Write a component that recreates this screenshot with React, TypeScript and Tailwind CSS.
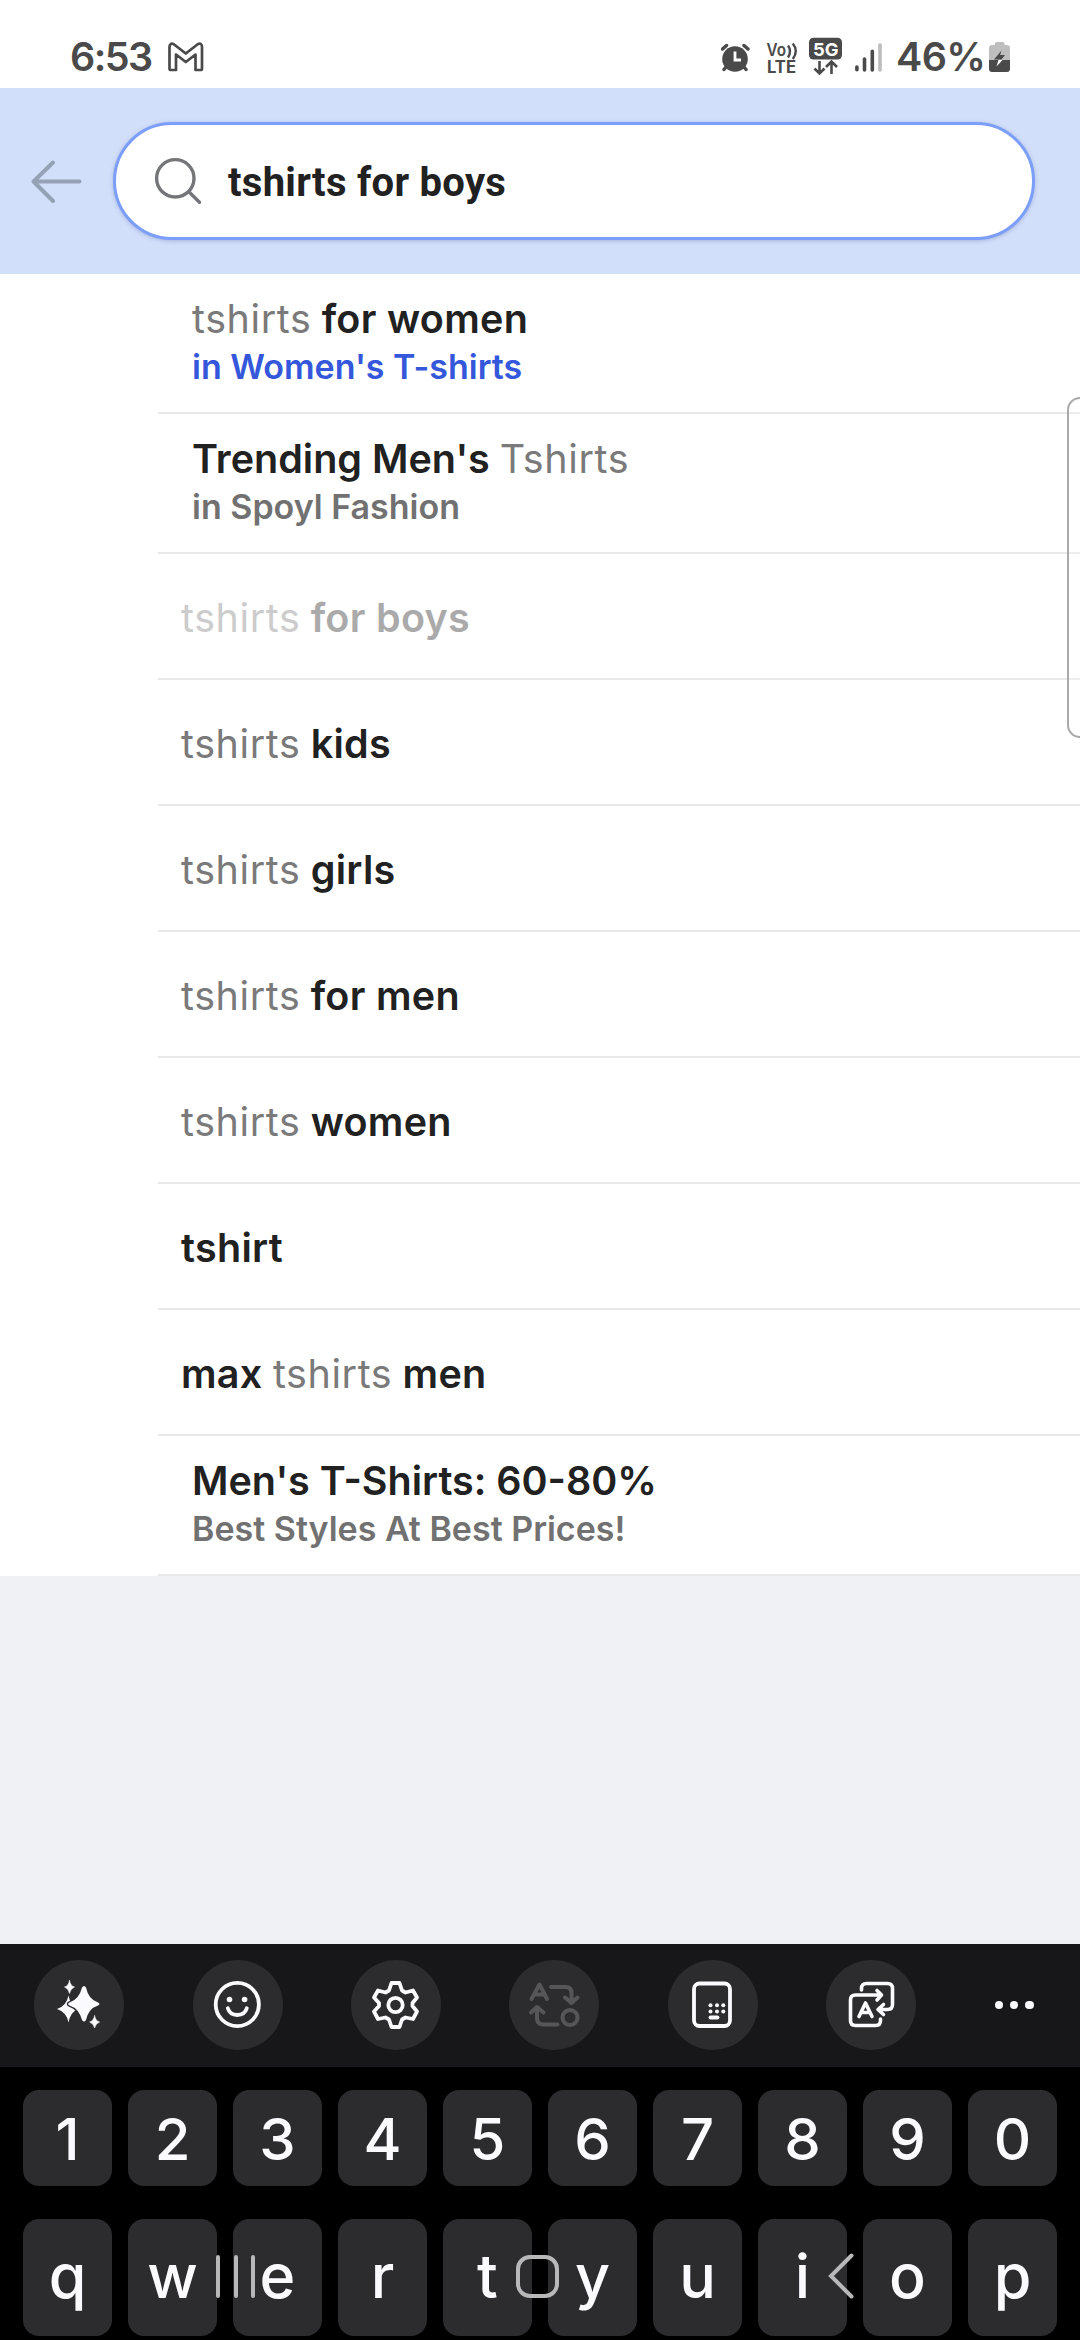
import type { ReactNode } from 'react';

type Part = { text: string; dim?: boolean };
type Row = { parts: Part[]; sub?: string; blue?: boolean; faded?: boolean; tight?: boolean };

const rows: Row[] = [
  { parts: [{ text: 'tshirts', dim: true }, { text: ' for women' }], sub: "in Women's T-shirts", blue: true },
  { parts: [{ text: "Trending Men's " }, { text: 'Tshirts', dim: true }], sub: 'in Spoyl Fashion', tight: true },
  { parts: [{ text: 'tshirts', dim: true }, { text: ' for boys' }], faded: true },
  { parts: [{ text: 'tshirts', dim: true }, { text: ' kids' }] },
  { parts: [{ text: 'tshirts', dim: true }, { text: ' girls' }] },
  { parts: [{ text: 'tshirts', dim: true }, { text: ' for men' }] },
  { parts: [{ text: 'tshirts', dim: true }, { text: ' women' }] },
  { parts: [{ text: 'tshirt' }] },
  { parts: [{ text: 'max ' }, { text: 'tshirts', dim: true }, { text: ' men' }] },
  { parts: [{ text: "Men's T-Shirts: 60-80%" }], sub: 'Best Styles At Best Prices!', tight: true },
];

function StatusBar() {
  return (
    <div className="flex h-[88px] items-center bg-white pt-[26px] text-[#4a4a4a]">
      <span className="ml-[70px] w-[98px] whitespace-nowrap text-[39.5px] leading-[44px] font-semibold tracking-[-1.6px]">6:53</span>
      <svg className="h-[30px] w-[36px]" viewBox="0 0 36 30" fill="none" stroke="currentColor" strokeWidth="2.7" strokeLinejoin="round">
        <path d="M1.5 26.5V4.5Q2 .8 5.5 2L17.8 11.5 30 2Q33.800 .8 34 4.500V26.500Q34 28 32.500 28H27.500V12.500L17.800 20 8 12.500V28H3Q1.500 28 1.500 26.500Z" />
      </svg>
      <svg className="ml-[517px] h-[30px] w-[30px]" viewBox="0 0 30 30">
        <g stroke="currentColor" strokeWidth="3.500" strokeLinecap="round" fill="none">
          <path d="M1.500 7 5.500 3.500M27 7l-4-3.500M5.500 24.500l-2.500 3M22.500 24.500l2.500 3" />
        </g>
        <circle cx="14" cy="17" r="12.800" fill="currentColor" />
        <path d="M14 9.500v8.500h6" stroke="#fff" strokeWidth="2.800" fill="none" />
      </svg>
      <svg className="ml-[14px] h-[34px] w-[34px] overflow-visible" viewBox="0 0 34 34" fill="currentColor">
        <text x="1.500" y="16" fontSize="17" fontWeight="600" textLength="19.500" lengthAdjust="spacingAndGlyphs" fontFamily="Inter">Vo</text>
        <text x="2" y="33" fontSize="17" fontWeight="700" textLength="29" lengthAdjust="spacingAndGlyphs" fontFamily="Inter">LTE</text>
        <path d="M23 5.500q4 5.500 0 12M27.800 3.500q6 7.500 0 15.500" fill="none" stroke="currentColor" strokeWidth="2.400" />
      </svg>
      <svg className="ml-[10px] h-[38px] w-[34px] overflow-visible" viewBox="0 0 34 38" fill="none">
        <rect x="0" y="-.2" width="33" height="21.700" rx="4.500" fill="currentColor" />
        <text x="4" y="17.500" fontSize="18" fontWeight="700" fill="#fff" textLength="25.500" lengthAdjust="spacingAndGlyphs" fontFamily="Inter">5G</text>
        <path d="M10.500 23v12M5.500 30.500l5 5 5-5M22.500 36V24.500M17 29l5.500-5.500L28 29" stroke="currentColor" strokeWidth="2.600" />
      </svg>
      <svg className="ml-[12px] h-[30px] w-[28px]" viewBox="0 0 28 30" fill="none" strokeWidth="3.600" strokeLinecap="round" stroke="currentColor">
        <path d="M1.900 25v2.800M9.500 17V28M17.300 9.200V28" />
        <path d="M25 3V28" stroke="#bcbcbc" />
      </svg>
      <span className="ml-[13px] w-[90px] whitespace-nowrap text-[39.5px] leading-[44px] font-semibold tracking-[-0.6px]">46%</span>
      <svg className="ml-[3px] h-[32px] w-[22px]" viewBox="0 0 22 32">
        <path d="M6 4V2.500Q6 1 8 1h5.500Q15.500 1 15.500 2.500V4H18Q21 4 21 7V19H0V7Q0 4 3 4Z" fill="#bebebe" />
        <path d="M0 19H21V27.500Q21 31 18 31H3Q0 31 0 27.500Z" fill="currentColor" />
        <path d="M12.500 9.500 5 18.500H9.500L11 14.500Z" fill="currentColor" />
        <path d="M10.500 14H16L12.500 18.500H9Z" fill="currentColor" />
        <path d="M9.500 19H13.500L7.500 25.500Z" fill="#fff" />
      </svg>
    </div>
  );
}

function SearchHeader() {
  return (
    <div className="flex h-[186px] items-center bg-[#d2dffb] pb-[0.5px]">
      <svg className="ml-[30px] h-[46px] w-[54px]" viewBox="0 0 54 46" fill="none" stroke="#95a1b5" strokeWidth="4" strokeLinecap="round" strokeLinejoin="round">
        <path d="M49.500 23.500H3.500M23 4.500 3.500 23.500 23 43" />
      </svg>
      <div className="ml-[29px] flex h-[118px] w-[922px] items-center rounded-full border-[3px] border-[#7c9efb] bg-white shadow-[0_1px_4px_rgba(60,80,140,0.3)]">
        <svg className="ml-[38px] h-[48px] w-[48px]" viewBox="0 0 48 48" fill="none" stroke="#747579" strokeWidth="3.400" strokeLinecap="round">
          <circle cx="21.300" cy="21.300" r="18.700" />
          <path d="M34.800 34.800 45.500 45.300" />
        </svg>
        <span className="ml-[26px] pt-[4px] font-[Roboto] text-[40px] font-bold tracking-[0.28px] text-[#212121]">tshirts for boys</span>
      </div>
    </div>
  );
}

function Suggestion({ row }: { row: Row }) {
  const title = (
    <div className={row.faded ? 'whitespace-pre text-[39.5px] leading-[48px] opacity-38' : 'whitespace-pre text-[39.5px] leading-[48px]'}>
      {row.parts.map((p, i) => (
        <span
          key={i}
          className={
            p.dim
              ? 'font-normal tracking-[0.6px] text-[#7a7a7a]'
              : row.tight
                ? 'font-semibold text-[#212121]'
                : 'font-semibold tracking-[0.3px] text-[#212121]'
          }
        >
          {p.text}
        </span>
      ))}
    </div>
  );
  if (!row.sub) {
    return <div className="ml-[158px] flex h-[126px] items-center border-b-2 border-[#e9e9e9] pt-[3px] pl-[23px]">{title}</div>;
  }
  return (
    <div className="ml-[158px] flex h-[140px] flex-col border-b-2 border-[#e9e9e9] pt-[21px] pl-[34px]">
      {title}
      <div className={row.blue ? 'text-[34px] leading-[48px] font-semibold text-[#3457dc]' : 'text-[34px] leading-[48px] font-semibold text-[#717171]'}>
        {row.sub}
      </div>
    </div>
  );
}

function Tool({ children }: { children: ReactNode }) {
  return (
    <div className="flex w-[158.4px] shrink-0 justify-center">
      <div className="flex size-[90px] items-center justify-center rounded-full bg-[#2c2c2e]">{children}</div>
    </div>
  );
}

const toolSvg = {
  width: 54,
  height: 54,
  viewBox: '0 0 54 54',
  fill: 'none',
  stroke: '#fafaff',
  strokeWidth: 3.8,
  strokeLinecap: 'round',
  strokeLinejoin: 'round',
} as const;

function Toolbar() {
  return (
    <div className="flex h-[123px] items-center bg-[#171719] pb-[1px]">
      <Tool>
        <svg {...toolSvg} fill="#fafaff" stroke="none">
          <path d="M16.500 17.500Q18.500 28 26 31Q18.500 34 16.500 44.500Q14.500 34 5 31Q14.500 28 16.500 17.500Z" />
          <path d="M30 9.500Q32 6.500 34 9.500Q36.500 21.500 46 24.500Q49 26 46 27.500Q36.500 30.500 34 42Q32 45 30 42Q27 30.500 17.500 27.500Q14.500 26 17.500 24.500Q27 21.500 30 9.500Z" stroke="#2c2c2e" strokeWidth="2.600" paintOrder="stroke" />
          <path d="M17.500 2.500Q18.500 8 22.500 9Q18.500 10.500 17.500 15.500Q16.500 10.500 12.500 9Q16.500 8 17.500 2.500Z" stroke="#fafaff" strokeWidth=".6" />
          <path d="M42.600 37.800Q43.600 43 47.600 44Q43.600 45.500 42.600 50Q41.600 45.500 37.600 44Q41.600 43 42.600 37.800Z" stroke="#fafaff" strokeWidth=".6" />
        </svg>
      </Tool>
      <Tool>
        <svg {...toolSvg}>
          <circle cx="26.300" cy="26.500" r="21.600" />
          <path d="M16.800 30.300Q18.800 37 26.300 37Q33.800 37 35.800 30.300" />
          <circle cx="18.500" cy="21.500" r="2.800" fill="#fafaff" stroke="none" />
          <circle cx="33.600" cy="21.500" r="2.800" fill="#fafaff" stroke="none" />
        </svg>
      </Tool>
      <Tool>
        <svg {...toolSvg}>
          <path d="M22.500 5H30.500L33 12.500 36.500 14.500 44 12.500 48 19.500 43.500 25V28L48 33.500 44 41 36.500 39.500 33 41.500 30.500 49H22.500L20 41.500 16.500 39.500 9 41 5 33.500 10 28V25L5 19.500 9 12.500 16.500 14.500 20 12.500Z" />
          <circle cx="26.500" cy="27" r="7.200" />
        </svg>
      </Tool>
      <Tool>
        <svg {...toolSvg} stroke="#565658" strokeWidth={4}>
          <path d="M4.500 21 12.500 6.500 20 21M8 16.500H17M24 9H38.500Q44.500 9 44.500 15V25M38 19.500 44.500 25 50.500 19.500M4 34.500 10 29 16.500 34.500M10 30V40Q10 46.500 16.500 46.500H30.500" />
          <circle cx="43" cy="39.500" r="7.500" />
        </svg>
      </Tool>
      <Tool>
        <svg {...toolSvg}>
          <rect x="8" y="5.500" width="36" height="42.500" rx="5.500" />
          <path d="M24.500 39.500H31.500" />
          <g fill="#fafaff" stroke="none">
            <circle cx="24.500" cy="27.300" r="2" />
            <circle cx="31" cy="27.300" r="2" />
            <circle cx="37.300" cy="27.300" r="2" />
            <circle cx="24.500" cy="33.500" r="2" />
            <circle cx="31" cy="33.500" r="2" />
            <circle cx="37.300" cy="33.500" r="2" />
          </g>
        </svg>
      </Tool>
      <Tool>
        <svg {...toolSvg} strokeWidth={3.6}>
          <path d="M17.500 12V10.500Q17.500 5.500 22.500 5.500H43.500Q48.500 5.500 48.500 10.500V26.500Q48.500 31.500 43.500 31.500H35M39.500 26.500 34 31.500 39.500 36.500M37.500 17H11.500Q6.500 17 6.500 22V42.500Q6.500 47.500 11.500 47.500H31.500Q36.500 47.500 36.500 42.500V41M33 12.500 37.500 17 33 22" />
          <path d="M15 38.500 21.500 25 28 38.500M18 34.500H25" />
        </svg>
      </Tool>
      <div className="ml-[44.5px] flex gap-[7px]">
        <span className="size-[8.300px] rounded-full bg-[#fafaff]" />
        <span className="size-[8.300px] rounded-full bg-[#fafaff]" />
        <span className="size-[8.300px] rounded-full bg-[#fafaff]" />
      </div>
    </div>
  );
}

function Keyboard() {
  return (
    <div className="h-[396px] bg-black">
      <Toolbar />
      <div className="flex gap-4 px-[23px] pt-[23px]">
        {'1234567890'.split('').map((k) => (
          <div key={k} className="flex h-[96px] w-[89px] items-center justify-center rounded-[16px] bg-[#2c2c2e] pt-[2px] text-[58px] font-medium text-[#fafaff]">
            {k}
          </div>
        ))}
      </div>
      <div className="flex gap-4 px-[23px] pt-[33px]">
        {'qwertyuiop'.split('').map((k) => (
          <div key={k} className="flex h-[117px] w-[89px] items-center justify-center rounded-[16px] bg-[#2c2c2e] pb-[1px] text-[61px] font-medium text-[#fafaff]">
            {k}
          </div>
        ))}
      </div>
    </div>
  );
}

function NavOverlay() {
  return (
    <div className="absolute bottom-[42px] left-0 flex h-[44px] w-full items-center">
      <div className="ml-[216px] flex gap-[13.500px]">
        <span className="h-[43px] w-[4px] rounded-full bg-[#b8b8b8]" />
        <span className="h-[43px] w-[4px] rounded-full bg-[#b8b8b8]" />
        <span className="h-[43px] w-[4px] rounded-full bg-[#b8b8b8]" />
      </div>
      <span className="ml-[261px] size-[43px] rounded-[14px] border-4 border-[#b8b8b8]" />
      <svg className="ml-[268px] h-[46px] w-[28px]" viewBox="0 0 28 46" fill="none" stroke="#b8b8b8" strokeWidth="4" strokeLinecap="round">
        <path d="M24.500 2.500 4 23 24.500 43.500" />
      </svg>
    </div>
  );
}

export default function App() {
  return (
    <div className="relative h-[2340px] w-[1080px] overflow-hidden bg-[#f0f1f4] font-[Inter,sans-serif]">
      <StatusBar />
      <SearchHeader />
      <div className="h-[1302px] bg-white">
        {rows.map((row, i) => (
          <Suggestion key={i} row={row} />
        ))}
      </div>
      <div className="h-[368px]" />
      <Keyboard />
      <div className="absolute top-[397px] left-[1067px] h-[341px] w-[30px] rounded-[13px] border-[2.500px] border-[#aaa] bg-white/20" />
      <NavOverlay />
    </div>
  );
}
